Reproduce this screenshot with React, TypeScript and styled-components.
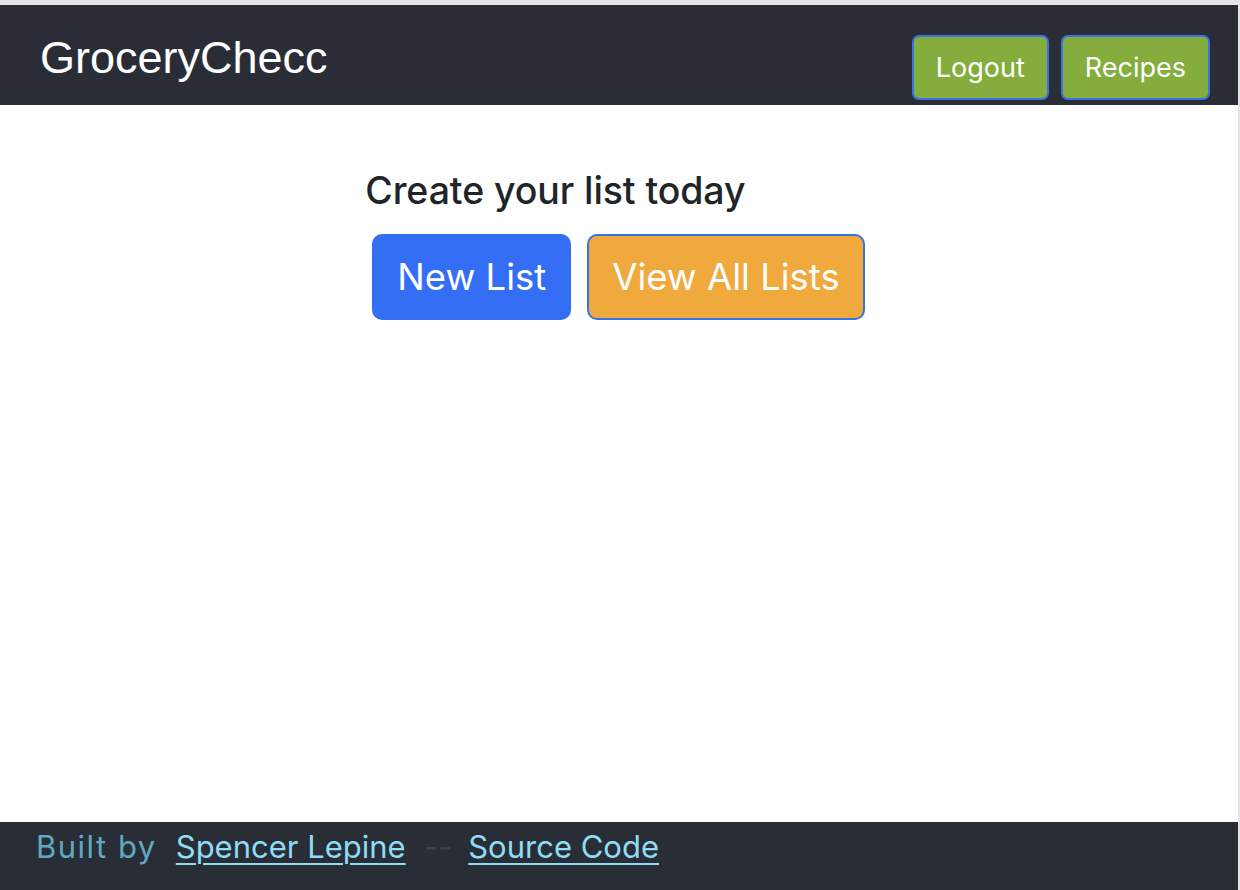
import React from "react";
import styled, { createGlobalStyle } from "styled-components";

const Global = createGlobalStyle`
  html, body { margin: 0; padding: 0; background: #e4e4e4; }
  body { font-family: Inter, "Noto Sans", sans-serif; }
  * { box-sizing: border-box; }
`;

const Frame = styled.div`
  width: 1240px;
  height: 890px;
  padding: 5px 2px 0 0;
  background: #e4e4e4;
`;

const Page = styled.div`
  height: 885px;
  background: #ffffff;
  display: flex;
  flex-direction: column;
`;

const Header = styled.header`
  height: 100px;
  background: #2a2d35;
  display: flex;
  align-items: flex-start;
  justify-content: space-between;
  padding: 0 28px 0 40px;
`;

const Brand = styled.div`
  font-family: "Liberation Sans", Arial, sans-serif;
  font-size: 45px;
  color: #ffffff;
  line-height: 1;
  margin-top: 30px;
`;

const NavButtons = styled.div`
  display: flex;
  gap: 12px;
  margin-top: 30px;
`;

const NavButton = styled.button`
  height: 65px;
  padding: 0 22px;
  background: #84ad3d;
  border: 2px solid #3a72e6;
  border-radius: 7px;
  color: #ffffff;
  font-family: Inter, sans-serif;
  font-size: 27px;
  cursor: pointer;
`;

const Main = styled.main`
  flex: 1;
  display: flex;
  flex-direction: column;
  align-items: center;
  padding-top: 64px;
`;

const Hero = styled.div`
  display: flex;
  flex-direction: column;
  align-items: flex-start;
  margin-right: 8px;
`;

const Heading = styled.h2`
  margin: 0;
  font-family: Inter, sans-serif;
  font-weight: 500;
  font-size: 37.5px;
  line-height: 44px;
  color: #212529;
  letter-spacing: -0.1px;
`;

const ButtonRow = styled.div`
  display: flex;
  gap: 16px;
  margin: 21px 0 0 7px;
`;

const BigButton = styled.button<{ $variant: "blue" | "orange" }>`
  height: 86px;
  padding: 0 23px;
  border-radius: 10px;
  border: 2px solid ${(p) => (p.$variant === "blue" ? "#346ef5" : "#3a72e6")};
  background: ${(p) => (p.$variant === "blue" ? "#346ef5" : "#f0a93c")};
  color: #ffffff;
  font-family: Inter, sans-serif;
  font-size: 36.5px;
  cursor: pointer;
`;

const Footer = styled.footer`
  height: 68px;
  background: #292d36;
  display: flex;
  align-items: center;
  padding: 0 0 20px 36px;
  font-family: Inter, sans-serif;
  font-size: 31px;
`;

const Built = styled.span`
  color: #5fa9c3;
  margin-right: 19px;
  letter-spacing: 1.5px;
`;

const FootLink = styled.a`
  color: #8fdcf4;
  text-decoration: underline;
  text-underline-offset: 5px;
  text-decoration-thickness: 2px;
`;

const Sep = styled.span`
  color: #3d4048;
  margin: 0 16px 0 18px;
`;

export default function App() {
  return (
    <>
      <Global />
      <Frame>
        <Page>
          <Header>
            <Brand>GroceryChecc</Brand>
            <NavButtons>
              <NavButton>Logout</NavButton>
              <NavButton>Recipes</NavButton>
            </NavButtons>
          </Header>
          <Main>
            <Hero>
              <Heading>Create your list today</Heading>
              <ButtonRow>
                <BigButton $variant="blue">New List</BigButton>
                <BigButton $variant="orange">View All Lists</BigButton>
              </ButtonRow>
            </Hero>
          </Main>
          <Footer>
            <Built>Built by</Built>
            <FootLink href="#">Spencer Lepine</FootLink>
            <Sep>--</Sep>
            <FootLink href="#">Source Code</FootLink>
          </Footer>
        </Page>
      </Frame>
    </>
  );
}
